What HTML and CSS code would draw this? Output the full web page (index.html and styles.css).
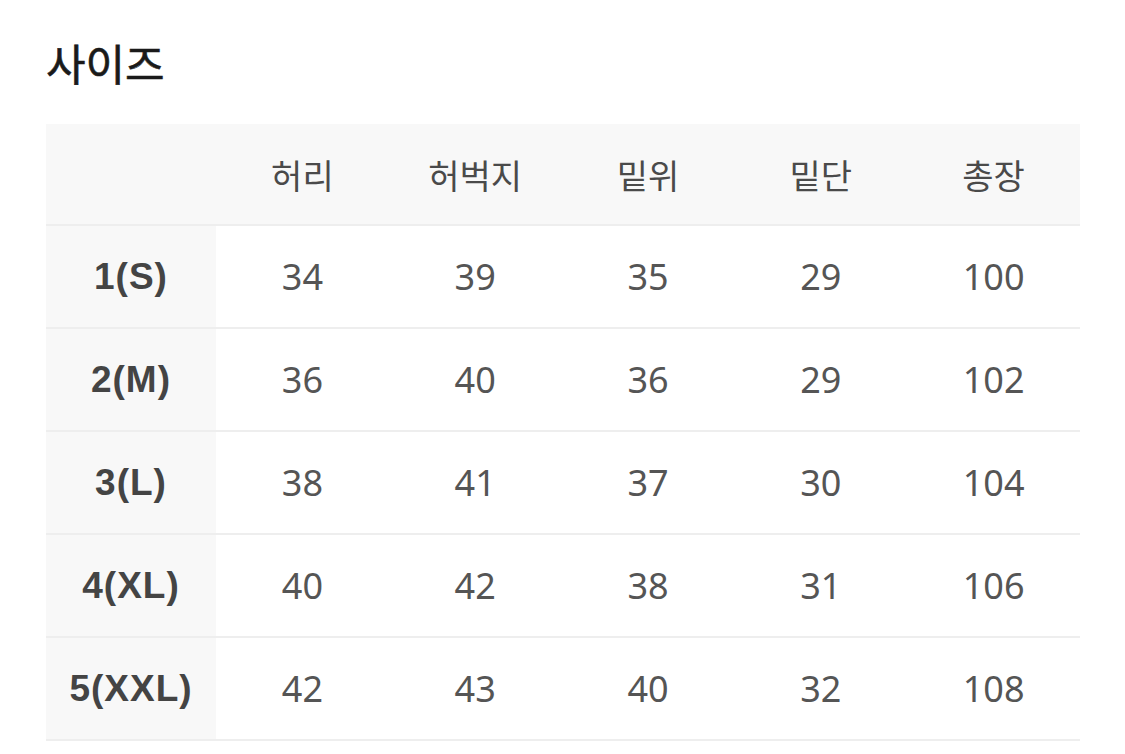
FILE: index.html
```html
<!DOCTYPE html>
<html lang="ko">
<head>
<meta charset="utf-8">
<link rel="stylesheet" href="styles.css">
</head>
<body>
<div class="page">
  <h2 class="title">사이즈</h2>
  <table class="size-table">
    <thead>
      <tr><th class="corner"></th><th>허리</th><th>허벅지</th><th>밑위</th><th>밑단</th><th>총장</th></tr>
    </thead>
    <tbody>
      <tr><th>1(S)</th><td>34</td><td>39</td><td>35</td><td>29</td><td>100</td></tr>
      <tr><th>2(M)</th><td>36</td><td>40</td><td>36</td><td>29</td><td>102</td></tr>
      <tr><th>3(L)</th><td>38</td><td>41</td><td>37</td><td>30</td><td>104</td></tr>
      <tr><th>4(XL)</th><td>40</td><td>42</td><td>38</td><td>31</td><td>106</td></tr>
      <tr><th>5(XXL)</th><td>42</td><td>43</td><td>40</td><td>32</td><td>108</td></tr>
    </tbody>
  </table>
</div>
</body>
</html>
```
FILE: styles.css
```css
html, body { margin: 0; padding: 0; background: #fff; }
body { font-family: "Noto Sans", "Noto Sans CJK KR", sans-serif; color: #222; }
.page { padding: 26px 45px 0 46px; }
.title {
  margin: 0 0 26px 0;
  font-family: "Noto Sans CJK KR", sans-serif;
  font-size: 43px;
  font-weight: 400;
  line-height: 72px;
  color: #1a1a1a;
  -webkit-text-stroke: 0.6px #1a1a1a;
}
.size-table {
  width: 1034px;
  border-collapse: collapse;
  table-layout: fixed;
}
.size-table th, .size-table td {
  text-align: center;
  vertical-align: middle;
  border-bottom: 2px solid #eeeeee;
  font-size: 36px;
  color: #555;
  font-weight: 400;
  padding: 0;
}
.size-table thead th {
  background: #f8f8f8;
  height: 100px;
  font-family: "Noto Sans CJK KR", sans-serif;
  font-size: 34px;
  color: #4a4a4a;
}
.size-table thead th.corner { width: 170px; }
.size-table tbody th {
  background: #f8f8f8;
  font-family: "Liberation Sans", "Noto Sans CJK KR", sans-serif;
  font-size: 37px;
  letter-spacing: 1px;
  font-weight: 700;
  color: #444;
  height: 101px;
}
.size-table tbody td { background: #fff; height: 101px; }
```
